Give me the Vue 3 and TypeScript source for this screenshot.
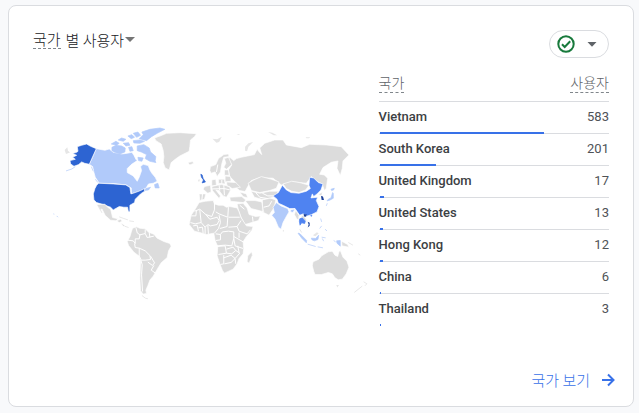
<script setup lang="ts">
interface CountryRow {
  name: string
  users: number
}

const rows: CountryRow[] = [
  { name: 'Vietnam', users: 583 },
  { name: 'South Korea', users: 201 },
  { name: 'United Kingdom', users: 17 },
  { name: 'United States', users: 13 },
  { name: 'Hong Kong', users: 12 },
  { name: 'China', users: 6 },
  { name: 'Thailand', users: 3 },
]

const totalUsers = 814

const barWidth = (users: number): string => `${((users / totalUsers) * 100).toFixed(2)}%`
</script>

<template>
  <main class="page">
    <section class="card">
      <header class="card-header">
        <button type="button" class="title">
          <span class="term">국가</span>
          <span>별 사용자</span>
          <svg class="caret" viewBox="0 0 10 5" aria-hidden="true"><path d="M0 0h10L5 5z" /></svg>
        </button>
        <button type="button" class="status" aria-label="데이터 상태">
          <svg class="check" viewBox="0 0 18 18" aria-hidden="true">
            <circle cx="9" cy="9" r="7.7" />
            <path d="M5 9.3l2.7 2.7 5.5-5.7" />
          </svg>
          <svg class="caret" viewBox="0 0 10 5" aria-hidden="true"><path d="M0.5 0h9L5 4.8z" /></svg>
        </button>
      </header>

      <div class="body">
        <svg class="map" viewBox="0 0 960 540" role="img" aria-label="국가 별 사용자">
          <!-- North America -->
          <g>
            <path class="light" d="M139 86L165 91 178 87 190 97 215 102 232 100 246 97 252 106 258 118 262 122 244 134 232 146 232 158 250 168 262 184 268 172 275 152 272 140 280 133 295 137 300 150 306 160 316 172 322 184 310 190 296 192 288 205 272 213 245 222 244 204 228 195 190 191 148 190 136 172 132 158 128 140 118 133Z" />
            <path class="light island" d="M186 82L198 76 215 78 226 84 225 96 210 102 196 98 186 92ZM184 72L198 64 208 70 200 76ZM205 60L215 54 228 58 220 64ZM220 70L236 68 240 76 228 78ZM234 48L246 44 254 52 244 56ZM250 62L270 60 284 64 270 70 252 69ZM268 56L280 44 276 36 300 28 330 24 345 28 322 40 305 50 290 62ZM250 40L264 36 272 46 260 52ZM262 78L282 74 298 84 302 96 318 110 316 122 318 128 300 124 286 116 290 104 274 96 262 92ZM264 112L280 114 276 124 266 122ZM236 82L246 80 250 92 240 94ZM314 194L324 190 328 204 316 204ZM288 206L302 202 296 210 284 212Z" />
            <path class="dark" d="M82 80L95 76 110 72 122 79 139 86 118 133 104 130 95 126 86 134 72 139 62 132 60 122 76 118 68 112 80 106 68 101 80 97 84 94Z" />
            <path class="dark" d="M146 190L190 192 228 195 240 203 243 222 256 218 272 212 284 206 284 214 272 222 262 232 256 238 254 248 240 256 240 276 235 274 233 262 222 262 208 260 190 270 182 262 160 254 140 248 132 240 130 222 135 206 140 196Z" />
            <path class="pale" d="M44 90L52 82 54 92 60 98 48 102Z" />
            <path class="thin-light" d="M48 153L66 147 76 140M10 282l3 1M20 288l4 4M124 140l6 14M136 178l8 10" />
          </g>
          <!-- Greenland, Iceland and the United Kingdom -->
          <g transform="translate(150 0)">
            <path class="land" d="M164 54L186 46 200 40 240 38 290 41 284 50 272 60 270 80 268 94 240 108 226 118 214 128 208 150 196 144 190 128 192 110 190 92 184 72 168 62ZM264 128L278 125 282 130 270 135Z" />
            <path class="dark island" d="M303 163L307 165 310 176 317 186 307 189 311 180 305 172Z" />
            <path class="pale" d="M295 180l4 -3 1 7 -5 1Z" />
          </g>
          <!-- Central and South America -->
          <g transform="translate(120 225)">
            <path class="land" d="M20 29L45 28 54 38 62 42 68 68 84 72 78 78 62 76 46 62 36 42 30 46ZM80 78L92 73 97 79 88 83ZM92 84L106 92 100 95Z" />
            <path class="thin-pale" d="M26 34L36 54M88 66l14 5 12 4M118 78l14 2M104 94l12 4" />
            <path class="land" d="M128 100L140 96 150 100 166 102 176 112 192 118 202 130 222 140 240 146 244 154 236 168 232 188 214 204 204 220 196 234 190 244 180 256 174 272 168 286 170 296 160 298 152 288 150 250 152 200 148 184 132 172 116 152 112 140 120 126 124 112Z" />
            <path class="border" d="M138 98L142 114 150 120 148 132 136 132 136 146M114 136L130 138 136 146 M134 146L136 158 148 160 148 184 154 196M148 160L166 168 180 182 182 194 166 196 154 196M150 120L166 116 172 128 192 124M178 112L180 128M166 104L166 116M182 184L194 204 188 212 174 202M153 196L157 210 155 240 158 290M192 212L184 226 198 236" />
            <path class="thin-pale" d="M156 302L166 310 174 312" />
          </g>
          <!-- Europe, the Middle East and Asia -->
          <g transform="translate(390 0)">
            <path class="land" d="M150 112L162 122 170 116 184 112 204 108 224 104 232 88 240 98 246 104 240 84 255 70 285 60 310 60 320 75 365 83 390 73 440 75 485 80 508 105 490 123 488 145 482 167 472 145 475 123 455 127 430 143 420 163 434 165 444 175 440 205 434 212 428 193 406 180 395 170 380 190 340 186 305 195 280 175 240 173 215 182 204 200 196 215 180 212 165 200 168 188 150 170 146 150 156 135 146 118Z" />
            <path class="land" d="M205 190L222 180 245 170 275 178 298 186 290 205 270 212 240 218 215 212ZM310 192L336 184 360 188 388 196 378 210 358 218 336 214 320 206ZM90 152L92 140 108 134 116 116 132 104 146 102 148 110 132 112 126 132 122 156 112 170 106 156 94 160ZM134 116L146 112 156 134 140 148 132 142 138 130ZM134 150L146 150 148 166 134 166ZM136 168L152 170 154 184 136 186ZM140 186L168 188 182 202 158 206 142 198ZM116 178L134 178 136 192 116 190ZM96 180L108 178 110 196 96 198ZM74 200L92 196 94 216 84 220 70 208ZM58 222L78 222 74 238 60 242ZM96 200L112 196 126 194 150 200 152 212 146 222 140 232 130 228 118 212 108 210 122 228 118 236 98 212Z" />
            <path class="border" d="M114 134L110 156M118 196L120 212M132 196L134 226M98 207L134 206 150 210M126 180L126 192M68 222L66 242" />
            <path class="land" d="M150 232L186 230 200 242 190 248 152 244ZM180 216L200 222 204 234 190 230ZM196 242L226 242 246 246 252 276 238 272 214 266ZM214 214L240 220 270 214 296 214 288 228 268 236 246 238 224 232ZM248 240L270 234 288 240 284 262 268 286 248 276ZM172 252L190 250 202 264 208 284 228 290 242 288 236 302 196 314 184 292 176 270Z" />
            <path class="border" d="M228 218L240 232 264 236M248 220L264 228 282 228M252 262L268 258 276 244M180 256L194 268M218 290L220 306M218 240L216 222" />
            <path class="pale" d="M98 56L112 58 126 50 118 66 110 68 104 62ZM170 44l8 -2 2 3ZM265 36L278 38 292 46 282 46ZM378 52l14 0 -4 3 -8 0Z" />
            <path class="pale" d="M196 92L196 80 206 70 220 66 206 80 202 94Z" />
          </g>
          <!-- Africa -->
          <g transform="translate(390 210)">
            <path class="land" d="M58 38L76 34 100 32 104 42 116 46 130 46 140 52 150 50 172 54 178 66 184 84 200 108 220 110 216 122 200 140 190 156 192 176 190 192 178 206 172 222 160 238 134 250 128 242 120 222 112 198 114 170 106 152 102 130 80 134 60 128 44 124 28 104 34 76 46 58Z" />
            <path class="border" d="M104 38L104 60 96 80 78 74 60 58 44 64M34 78L48 78 50 62M60 60L64 98 46 102 32 98M78 74L90 88 112 82 118 92 112 104 92 108 84 104 76 112 64 98M108 66L118 72 144 82 146 52M146 82L180 82M118 76L122 98 116 116 104 130M144 84L142 110 120 116M146 112L172 110 184 92M172 110L178 124 202 132 212 120M40 108L52 106 56 124M56 114L68 112 70 130M76 112L76 132M84 106L86 132M108 132L122 134 128 126 146 124 162 126 162 146 156 168 136 166 112 168M122 134L122 150 108 152M162 140L190 156M162 146L166 168 190 176M112 170L136 168 140 190 116 194M140 178L160 172 168 182 156 192 140 190M132 196L132 222 122 224M132 204L154 196 166 206 154 218 134 222M168 182L180 190 166 206M166 206L168 222M178 128L178 144M174 168L178 188" />
            <path class="land" d="M216 186L218 196 208 220 202 216 204 198Z" />
          </g>
          <!-- South and East Asia, Oceania -->
          <g transform="translate(630 150)">
            <path class="land" d="M108 122L118 136 117 150 112 148 104 134ZM176 74L188 66 186 78ZM124 138l6 -2 8 10 4 8 -6 0Z" />
            <path class="mid" d="M40 78L56 68 68 46 80 60 94 68 118 70 140 64 152 56 148 46 150 22 162 24 176 38 190 42 184 60 172 72 162 80 158 72 154 84 174 82 170 92 178 110 172 126 156 134 144 138 130 132 120 136 106 116 90 116 70 106 56 100 52 88Z" />
            <path class="light" d="M50 98L64 108 84 116 88 126 82 136 70 158 64 178 56 172 46 148 36 136 44 128 40 112ZM92 120L106 117 100 128 93 126Z" />
            <path class="mid island" d="M120 147L128 144 137 154 135 161 126 159 121 166 119 154Z" />
            <path class="deep" d="M132 132L142 134 139 141 133 140ZM144 156l6 3 0 9 -6 5 3 -9ZM184 78L190 80 193 90 186 90Z" />
            <path class="mid island" d="M153 137l3 -1 1 2 -3 1Z" />
            <path class="light island" d="M214 58L224 55 222 60 216 62ZM219 68L221 70 221 85 210 91 202 93 206 88 214 84ZM115 190L120 191 141 212 140 219 127 206ZM155 205L168 206 177 196 175 209 164 213 157 210ZM231 213L242 212 242 229 232 220Z" />
            <path class="thin-light" d="M144 223L168 230M174 231L190 234M186 202L198 204M188 206L192 214M183 146L186 156M196 178L202 183M186 168L180 176M222 212L228 216M203 100L200 108" />
            <path class="land" d="M246 214L264 224 268 232 247 228ZM158 288L160 276 178 268 186 258 196 252 206 246 218 244 226 256 234 260 238 246 242 242 250 262 262 274 268 292 260 312 248 328 236 330 226 324 218 312 206 308 186 314 166 314 162 304Z" />
            <path class="pale" d="M230 346L238 346 233 353ZM70 180l3 2 -1 4 -3 -2ZM160 196l12 -9 5 4 -10 8Z" />
            <path class="thin-pale" d="M312 336L322 342 316 348M308 349L284 368M120 178L126 188M266 218L280 226M296 252l6 4" />
          </g>
        </svg>

        <table class="countries">
          <thead>
            <tr>
              <th scope="col"><span class="term">국가</span></th>
              <th scope="col" class="num"><span class="term">사용자</span></th>
            </tr>
          </thead>
          <tbody>
            <tr v-for="row in rows" :key="row.name">
              <th scope="row">
                {{ row.name }}
                <span class="bar-track"><span class="bar" :style="{ width: barWidth(row.users) }"></span></span>
              </th>
              <td class="num">{{ row.users }}</td>
            </tr>
          </tbody>
        </table>
      </div>

      <footer class="card-footer">
        <a href="#" class="more">
          국가 보기
          <svg class="arrow" viewBox="0 0 14 14" aria-hidden="true"><path d="M1 7h11M7 1.5L12.5 7 7 12.5" /></svg>
        </a>
      </footer>
    </section>
  </main>
</template>

<style>
body {
  background: #f8f9fb;
}
</style>

<style scoped>
.page {
  box-sizing: border-box;
  display: flex;
  min-height: 100vh;
  padding: 5px 5px 6px 8px;
  font-family: Roboto, 'Noto Sans CJK KR', sans-serif;
  color: #3c4043;
}

.card {
  box-sizing: border-box;
  display: flex;
  flex: 1;
  flex-direction: column;
  min-width: 0;
  padding: 24px 24px 16px;
  border: 1px solid #dadce0;
  border-radius: 8px;
  background: #fff;
}

.card-header {
  display: flex;
  align-items: flex-start;
  justify-content: space-between;
}

button {
  margin: 0;
  font: inherit;
  color: inherit;
  cursor: pointer;
}

.title {
  display: flex;
  align-items: center;
  padding: 0;
  border: 0;
  background: none;
  font-family: 'Noto Sans CJK KR', sans-serif;
  font-size: 15px;
  font-weight: 300;
  line-height: 18px;
  color: #202124;
}

.term {
  display: inline-block;
  border-bottom: 1px dashed #80868b;
}

.title .term {
  margin-right: 5px;
}

.caret {
  width: 10px;
  height: 5px;
  fill: #757575;
}

.title .caret {
  margin-left: 1px;
}

.status {
  box-sizing: border-box;
  display: flex;
  align-items: center;
  justify-content: space-between;
  width: 60px;
  height: 28px;
  padding: 0 11px 0 7px;
  border: 1px solid #dadce0;
  border-radius: 14px;
  background: #fff;
}

.status .caret {
  fill: #5f6368;
}

.check {
  width: 18px;
  height: 18px;
  fill: none;
  stroke: #187a3c;
  stroke-width: 2;
}

.body {
  display: grid;
  grid-template-columns: minmax(0, 3fr) minmax(0, 2fr);
  align-items: start;
  margin-top: 14px;
}

.map {
  box-sizing: border-box;
  display: block;
  width: 100%;
  padding: 48px 9px 0 17px;
}

.land,
.light,
.mid,
.dark {
  stroke: #fff;
  stroke-width: 2;
  stroke-linejoin: round;
}

.land {
  fill: #dcdcdc;
}

.pale {
  fill: #e6e6e6;
}

.light {
  fill: #b1cafa;
}

.mid {
  fill: #4f83f1;
}

.dark {
  fill: #2d64d2;
}

.deep {
  fill: #1d429b;
}

.light.island {
  stroke: #b1cafa;
}

.mid.island {
  stroke: #4f83f1;
}

.dark.island {
  stroke: #2d64d2;
}

.border {
  fill: none;
  stroke: #fff;
  stroke-width: 3;
  stroke-linejoin: round;
}

.thin-light,
.thin-pale {
  fill: none;
  stroke: #c9dafb;
  stroke-width: 3;
}

.thin-pale {
  stroke: #e8e8e8;
}

.countries {
  width: 100%;
  border-spacing: 0;
  font-size: 13px;
  line-height: 16px;
}

.countries th,
.countries td {
  box-sizing: border-box;
  height: 32px;
  padding: 0 0 2px;
  border-bottom: 1px solid #dadce0;
  text-align: left;
  font-weight: 500;
}

.countries td {
  color: #4f5357;
}

.countries .num {
  text-align: right;
  font-weight: 400;
}

.countries thead th,
.countries thead .num {
  height: 30px;
  padding-bottom: 8px;
  font-family: 'Noto Sans CJK KR', sans-serif;
  font-size: 14px;
  font-weight: 300;
  line-height: 20px;
  color: #5f6368;
}

.countries tbody tr {
  position: relative;
}

.countries tbody tr:last-child > * {
  border-bottom-color: transparent;
}

.bar-track {
  position: absolute;
  right: 0;
  bottom: 0;
  left: 1px;
  height: 2px;
}

.bar {
  display: block;
  min-width: 1px;
  height: 2px;
  background: #3871e8;
}

.card-footer {
  display: flex;
  justify-content: flex-end;
  margin-top: auto;
  margin-right: -6px;
}

.more {
  display: flex;
  align-items: center;
  gap: 11px;
  font-family: 'Noto Sans CJK KR', sans-serif;
  font-size: 15px;
  font-weight: 300;
  line-height: 20px;
  color: #3871e8;
  text-decoration: none;
}

.arrow {
  width: 14px;
  height: 14px;
  fill: none;
  stroke: #3871e8;
  stroke-width: 2;
}
</style>
